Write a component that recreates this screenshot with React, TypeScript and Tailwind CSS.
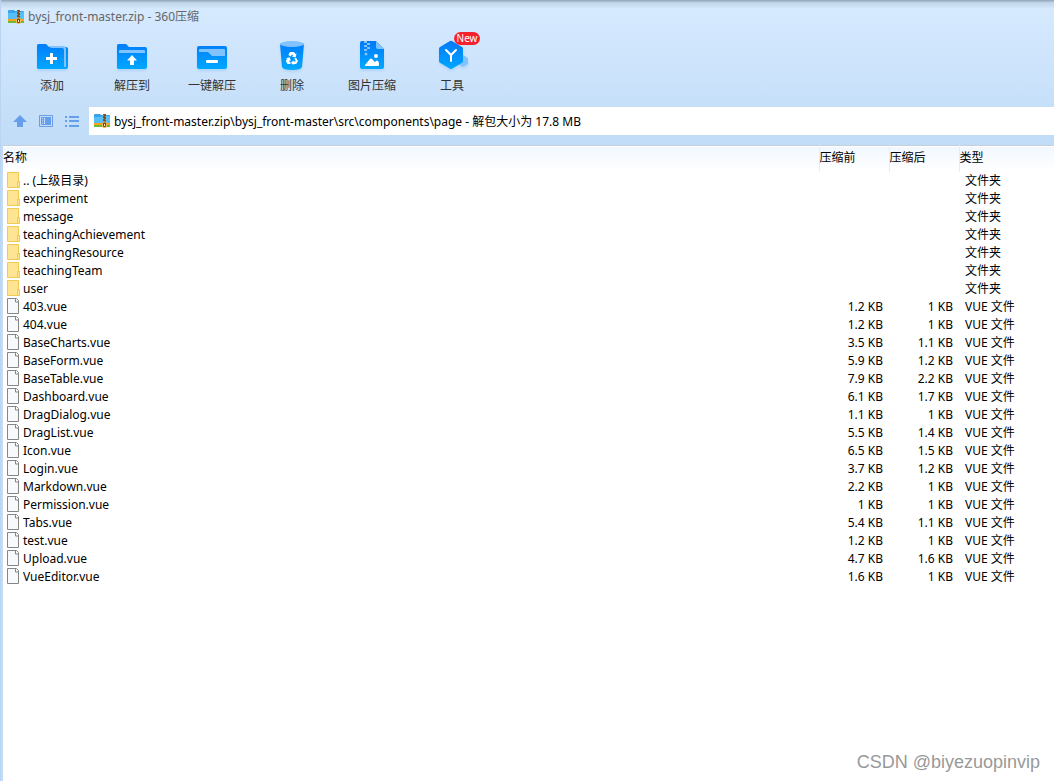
import type { ReactNode } from "react";

type Entry = { name: string; before?: string; after?: string };

const entries: Entry[] = [
  { name: ".. (上级目录)" },
  { name: "experiment" },
  { name: "message" },
  { name: "teachingAchievement" },
  { name: "teachingResource" },
  { name: "teachingTeam" },
  { name: "user" },
  { name: "403.vue", before: "1.2 KB", after: "1 KB" },
  { name: "404.vue", before: "1.2 KB", after: "1 KB" },
  { name: "BaseCharts.vue", before: "3.5 KB", after: "1.1 KB" },
  { name: "BaseForm.vue", before: "5.9 KB", after: "1.2 KB" },
  { name: "BaseTable.vue", before: "7.9 KB", after: "2.2 KB" },
  { name: "Dashboard.vue", before: "6.1 KB", after: "1.7 KB" },
  { name: "DragDialog.vue", before: "1.1 KB", after: "1 KB" },
  { name: "DragList.vue", before: "5.5 KB", after: "1.4 KB" },
  { name: "Icon.vue", before: "6.5 KB", after: "1.5 KB" },
  { name: "Login.vue", before: "3.7 KB", after: "1.2 KB" },
  { name: "Markdown.vue", before: "2.2 KB", after: "1 KB" },
  { name: "Permission.vue", before: "1 KB", after: "1 KB" },
  { name: "Tabs.vue", before: "5.4 KB", after: "1.1 KB" },
  { name: "test.vue", before: "1.2 KB", after: "1 KB" },
  { name: "Upload.vue", before: "4.7 KB", after: "1.6 KB" },
  { name: "VueEditor.vue", before: "1.6 KB", after: "1 KB" },
];

function ArchiveIcon() {
  return (
    <svg className="size-4 shrink-0" viewBox="0 0 16 16" aria-hidden="true">
      <path d="M0 2q0-1 1-1h5l1 1h8q1 0 1 1v8H0z" fill="#35a4ec" />
      <path d="M0 4h7l1-1h8v7H0z" fill="#56bff6" />
      <path d="M0 10h16v2H0z" fill="#ff9d1c" />
      <path d="M0 12h16v1.500q0 .5-1 .5H1q-1 0-1-.5z" fill="#6cbb35" />
      <path d="M9 1h3v9H9z" fill="#8a4a1c" />
      <path d="M9 2h1v1H9zM11 3h1v1h-1zM9 5h1v1H9zM11 6h1v1h-1zM9 8h1v1H9z" fill="#b98a58" />
      <rect x="8.500" y="9" width="4" height="5.500" rx="1.500" fill="#7a431b" stroke="#f2c05c" />
      <path d="M10 11h1v2h-1z" fill="#ffefb8" />
    </svg>
  );
}

function ToolSvg({ children }: { children: ReactNode }) {
  return (
    <svg className="size-8 drop-shadow-[0_2px_1px_rgba(50,140,240,0.16)]" viewBox="0 0 32 32" aria-hidden="true">
      <defs>
        <linearGradient id="tool-blue" gradientUnits="userSpaceOnUse" x1="0" y1="3" x2="0" y2="30">
          <stop offset="0" stopColor="#007cfa" />
          <stop offset="1" stopColor="#00a9ff" />
        </linearGradient>
      </defs>
      {children}
    </svg>
  );
}

const tools: { label: string; icon: ReactNode; badge?: string }[] = [
  {
    label: "添加",
    icon: (
      <>
        <path d="M1 5.500q0-1.500 1.500-1.500H10l3 3h17q2 0 2 2v18q0 2-2 2H2.500Q1 29 1 27.500z" fill="url(#tool-blue)" />
        <path d="M13 6h14q3 0 3 3v18h-2V10q0-2-2-2H15z" fill="#80c3ff" />
        <path d="M14 13h3v4h4v3h-4v4h-3v-4h-4v-3h4z" fill="#fff" />
      </>
    ),
  },
  {
    label: "解压到",
    icon: (
      <>
        <path d="M1 5.500Q1 4 2.500 4H10l3 3h16q2 0 2 2v18q0 2-2 2H2.500Q1 29 1 27.500z" fill="url(#tool-blue)" />
        <path d="M3 13v-2q0-1 1-1h24q1 0 1 1v2z" fill="#80c3ff" />
        <path d="M16 15l5 5.500h-3V25h-4v-4.500h-3z" fill="#fff" />
      </>
    ),
  },
  {
    label: "一键解压",
    icon: (
      <>
        <rect x="1" y="6" width="30" height="23" rx="2" fill="url(#tool-blue)" />
        <path d="M3 12v-2q0-1 1-1h24q1 0 1 1v6H16l-4-4z" fill="#80c3ff" />
        <rect x="10" y="20" width="12" height="3" rx="1" fill="#fff" />
      </>
    ),
  },
  {
    label: "删除",
    icon: (
      <>
        <path d="M4 4h24l-2 23q-1 3-10 3T6 27z" fill="url(#tool-blue)" />
        <ellipse cx="16" cy="4" rx="12" ry="3" fill="#80c3ff" />
        <g fill="#fff">
          <path d="M14 12h4l1.500 2 1-.5-.8 4-3.900-1 1.200-.8-.9-1.500-1.400 2.200-2.300-1.300z" />
          <path d="M20 17.700l2 3.300-1.800 3H17.500v1.200L15 22.700l2.500-2.500v1.300h1.700l.6-.8-1.600-1.900z" />
          <path d="M11.500 24l-1.700-3.100 1.300-2-1.100-.6 3.800-1 1 3.700-1.200-.6-.4.900.6.800h.7V24z" />
        </g>
      </>
    ),
  },
  {
    label: "图片压缩",
    icon: (
      <>
        <path d="M4 3q0-2 2-2h14l8 8v18q0 2-2 2H6q-2 0-2-2z" fill="url(#tool-blue)" />
        <path d="M20 1l8 8h-6q-2 0-2-2z" fill="#80c3ff" />
        <path d="M8 1h3v2H8zM11 3h3v2h-3zM8 5h3v2H8zM11 7h3v2h-3zM8 9h3v2H8z" fill="#80c3ff" />
        <circle cx="10" cy="14" r="1.500" fill="#80c3ff" />
        <circle cx="20" cy="16" r="2" fill="#fff" />
        <path d="M9 26v-1l5-6q1-1 2 0l3 3 1-1q1-1 2 0l1 2v2q0 1-1 1z" fill="#fff" />
      </>
    ),
  },
  {
    label: "工具",
    badge: "New",
    icon: (
      <>
        <path d="M27 15l5 3v6l-5 3-5-3v-6z" fill="#80c3ff" />
        <path d="M14 1q1-.6 2 0l10 6q1 .6 1 2v12q0 1-1 1.700l-10 6q-1 .6-2 0l-10-6Q3 22 3 21V9q0-1.400 1-2z" fill="url(#tool-blue)" />
        <path d="M10 10l5 5 5-5M15 15v6" fill="none" stroke="#fff" strokeWidth="2" strokeLinecap="round" />
      </>
    ),
  },
];

function EntryIcon({ folder }: { folder: boolean }) {
  return folder ? (
    <svg className="mb-0.5 h-4 w-[13px] shrink-0" viewBox="0 0 13 16" aria-hidden="true">
      <path d="M.5.5h11v9h1v6H.5z" fill="#ffe494" stroke="#efcb52" />
      <path d="M10.500 9.500h2v6h-2z" fill="#ffe494" stroke="#efcb52" />
    </svg>
  ) : (
    <svg className="mb-0.5 h-4 w-[13px] shrink-0" viewBox="0 0 13 16" aria-hidden="true">
      <path d="M.5.5h9l2 2v13H.5z" fill="#f8f9fa" stroke="#858585" />
      <path d="M8.500 1v3H11" fill="#fff" stroke="#858585" />
    </svg>
  );
}

export default function App() {
  return (
    <div className="flex min-h-screen flex-col border-l border-[#b9d5f2] bg-white font-['Noto_Sans','Noto_Sans_CJK_SC',sans-serif] text-xs leading-[18px] text-black">
      <header className="bg-linear-to-b from-[#d7eaff] to-[#c0dcf7]">
        <div className="h-[9px] bg-linear-to-b from-[#8fa3b8] via-[#c0d4e7] via-30% to-[#d5e9fe]" />
        <h1 className="flex h-4 items-center gap-1 pl-[7px] text-[#666]">
          <ArchiveIcon />
          bysj_front-master.zip - 360压缩
        </h1>
        <nav className="flex pt-[15px] pl-[11px]" aria-label="工具栏">
          {tools.map((tool) => (
            <button key={tool.label} type="button" className="relative flex w-20 flex-col items-center gap-[5px] text-[#333]">
              <ToolSvg>{tool.icon}</ToolSvg>
              <span>{tool.label}</span>
              {tool.badge && (
                <span className="absolute -top-2 left-[42px] h-[13px] w-[26px] rounded-full bg-[#f5222d] text-center text-[10px] leading-[13px] text-white">
                  {tool.badge}
                </span>
              )}
            </button>
          ))}
        </nav>
        <div className="flex items-center pt-3 pb-[10px]">
          <div className="flex w-[88px] items-center gap-2.5 pl-[11px] text-[#659eea]">
            <button type="button" aria-label="向上">
              <svg className="size-4" viewBox="0 0 16 16" fill="currentColor">
                <path d="M8 2l7 7h-4v5H5V9H1z" />
              </svg>
            </button>
            <button type="button" aria-label="预览">
              <svg className="size-4" viewBox="0 0 16 16" fill="currentColor">
                <path d="M1.500 2.500h13v11h-13z" fill="none" stroke="currentColor" />
                <path d="M3 4h10v8H3z" />
                <path d="M4 5h1v1H4zM4 7.500h1v1H4zM4 10h1v1H4zM6 5h1v6H6z" fill="#c9e0fa" />
              </svg>
            </button>
            <button type="button" aria-label="列表">
              <svg className="size-4" viewBox="0 0 16 16" fill="currentColor">
                <path d="M1 3h2v2H1zM5 3h10v2H5zM1 7h2v2H1zM5 7h10v2H5zM1 12h2v2H1zM5 12h10v2H5z" />
              </svg>
            </button>
          </div>
          <div className="flex h-7 flex-1 items-center gap-1 bg-white pl-[5px]">
            <ArchiveIcon />
            <input
              aria-label="路径"
              className="min-w-0 flex-1 pt-0.5 outline-none"
              defaultValue="bysj_front-master.zip\bysj_front-master\src\components\page - 解包大小为 17.8 MB"
            />
          </div>
        </div>
      </header>
      <main className="flex-1 border-l-2 border-[#c4dbf3]">
        <table className="w-full table-fixed border-collapse">
          <colgroup>
            <col />
            <col className="w-[70px]" />
            <col className="w-[70px]" />
            <col className="w-[95px]" />
          </colgroup>
          <thead>
            <tr className="h-[26px] border-t border-[#c5d0dc] bg-linear-to-b from-[#f2f8ff] to-white text-left">
              <th className="p-0 pb-0.5 font-normal">名称</th>
              <th className="border-l border-[#e2effa] p-0 pb-0.5 font-normal">压缩前</th>
              <th className="border-l border-[#e2effa] p-0 pb-0.5 font-normal">压缩后</th>
              <th className="border-l border-[#e2effa] p-0 pb-0.5 font-normal">类型</th>
            </tr>
          </thead>
          <tbody>
            {entries.map((entry) => (
              <tr key={entry.name} className="h-[18px] whitespace-nowrap">
                <td className="p-0">
                  <div className="flex h-[18px] items-center gap-[3px] pl-1">
                    <EntryIcon folder={!entry.before} />
                    {entry.name}
                  </div>
                </td>
                <td className="p-0 pr-1.5 text-right">{entry.before}</td>
                <td className="p-0 pr-1.5 text-right">{entry.after}</td>
                <td className="p-0 pl-1.5">{entry.before ? "VUE 文件" : "文件夹"}</td>
              </tr>
            ))}
          </tbody>
        </table>
      </main>
      <footer className="border-l-2 border-[#c4dbf3] pr-3.5 pb-[5px] text-right font-['Liberation_Sans',sans-serif] text-lg leading-7 text-[#999]">
        CSDN @biyezuopinvip
      </footer>
    </div>
  );
}
